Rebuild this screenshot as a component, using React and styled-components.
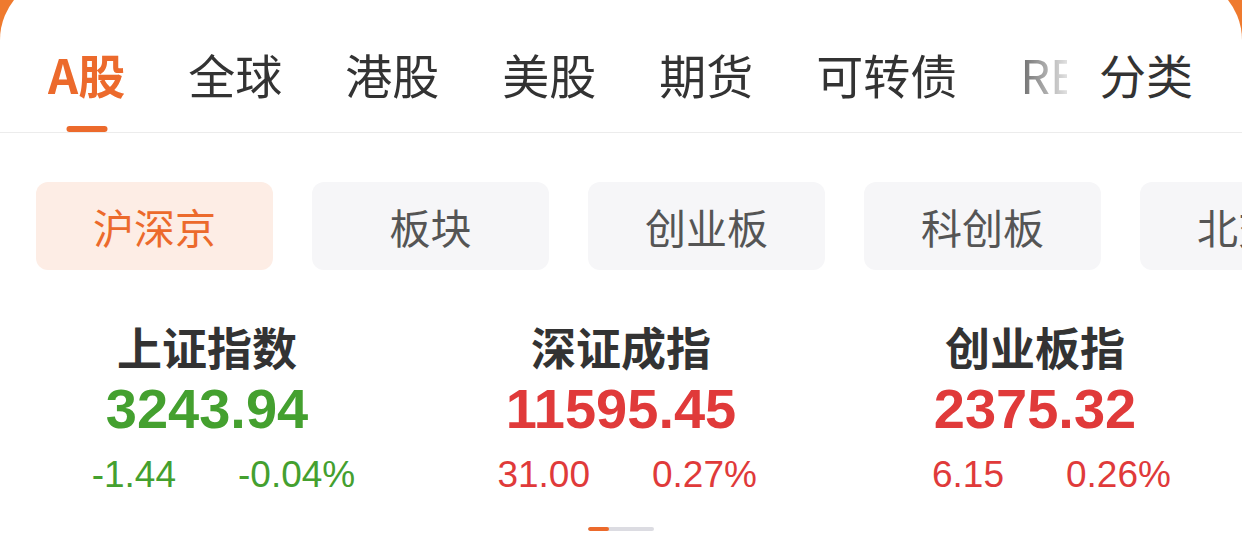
import styled, { createGlobalStyle } from "styled-components";

const GlobalStyle = createGlobalStyle`
  html, body {
    margin: 0;
    padding: 0;
    background: #ef7a2e;
    overflow: hidden;
  }
  body {
    font-family: "Noto Sans CJK SC", "Noto Sans", sans-serif;
  }
`;

const ORANGE = "#ec6a2c";
const GREEN = "#44a02f";
const RED = "#e03a3a";

const Card = styled.div`
  background: #fff;
  margin-top: -24px;
  padding-top: 24px;
  border-radius: 64px 64px 0 0;
  height: 561px;
  box-sizing: border-box;
`;

const TabBar = styled.div`
  display: flex;
  height: 133px;
  box-sizing: border-box;
  border-bottom: 1px solid #ececec;
  padding-left: 48px;
  padding-right: 49px;
`;

const Scroller = styled.div`
  flex: 1;
  display: flex;
  gap: 63px;
  overflow: hidden;
  -webkit-mask-image: linear-gradient(to right, #000 calc(100% - 70px), rgba(0, 0, 0, 0.15));
  mask-image: linear-gradient(to right, #000 calc(100% - 70px), rgba(0, 0, 0, 0.15));
`;

const Tab = styled.div`
  position: relative;
  flex-shrink: 0;
  display: flex;
  align-items: center;
  padding-top: 14px;
  box-sizing: border-box;
  height: 100%;
  font-size: 47px;
  line-height: 1;
  white-space: nowrap;
  color: ${(p) => (p.$active ? ORANGE : "#333")};
  font-weight: ${(p) => (p.$active ? 700 : 400)};
`;

const Underline = styled.span`
  position: absolute;
  left: 50%;
  bottom: 0;
  transform: translateX(-50%);
  width: 41px;
  height: 6px;
  border-radius: 3px;
  background: ${ORANGE};
`;

const CategoryButton = styled(Tab)`
  margin-left: 32px;
`;

const ChipRow = styled.div`
  display: flex;
  gap: 39px;
  padding: 49px 0 0 36px;
  overflow: hidden;
`;

const Chip = styled.div`
  flex-shrink: 0;
  width: 237px;
  height: 88px;
  border-radius: 12px;
  display: flex;
  align-items: center;
  justify-content: center;
  font-size: 41px;
  background: ${(p) => (p.$active ? "#fdede5" : "#f6f6f8")};
  color: ${(p) => (p.$active ? ORANGE : "#555")};
`;

const IndexGrid = styled.div`
  display: grid;
  grid-template-columns: repeat(3, 1fr);
  padding-top: 49px;
`;

const IndexCell = styled.div`
  display: flex;
  flex-direction: column;
  align-items: center;
`;

const IndexName = styled.div`
  font-size: 45px;
  line-height: 56px;
  font-weight: 700;
  color: #333;
`;

const IndexValue = styled.div`
  margin-top: 2px;
  font-family: "Liberation Sans", Arial, sans-serif;
  font-size: 56px;
  line-height: 64px;
  font-weight: 700;
  color: ${(p) => p.$color};
`;

const ChangeRow = styled.div`
  margin-top: 12px;
  width: 100%;
  display: grid;
  grid-template-columns: 1fr 1fr;
  column-gap: 62px;
  font-family: "Liberation Sans", Arial, sans-serif;
  font-size: 37px;
  line-height: 44px;
  color: ${(p) => p.$color};
  span:first-child {
    justify-self: end;
  }
  span:last-child {
    justify-self: start;
  }
`;

const Pager = styled.div`
  display: flex;
  justify-content: center;
  margin-top: 30px;
`;

const PagerTrack = styled.div`
  display: flex;
  width: 66px;
  height: 4px;
  border-radius: 2px;
  background: #dcdce2;
  overflow: hidden;
`;

const PagerThumb = styled.div`
  width: 21px;
  height: 100%;
  border-radius: 2px;
  background: ${ORANGE};
`;

const tabs = ["A股", "全球", "港股", "美股", "期货", "可转债", "REITs"];
const chips = ["沪深京", "板块", "创业板", "科创板", "北交所"];
const indices = [
  { name: "上证指数", value: "3243.94", change: "-1.44", pct: "-0.04%", color: GREEN },
  { name: "深证成指", value: "11595.45", change: "31.00", pct: "0.27%", color: RED },
  { name: "创业板指", value: "2375.32", change: "6.15", pct: "0.26%", color: RED },
];

export default function App() {
  return (
    <>
      <GlobalStyle />
      <Card>
        <TabBar>
          <Scroller>
            {tabs.map((t, i) => (
              <Tab key={t} $active={i === 0}>
                {t}
                {i === 0 && <Underline />}
              </Tab>
            ))}
          </Scroller>
          <CategoryButton>分类</CategoryButton>
        </TabBar>
        <ChipRow>
          {chips.map((c, i) => (
            <Chip key={c} $active={i === 0}>
              {c}
            </Chip>
          ))}
        </ChipRow>
        <IndexGrid>
          {indices.map((d) => (
            <IndexCell key={d.name}>
              <IndexName>{d.name}</IndexName>
              <IndexValue $color={d.color}>{d.value}</IndexValue>
              <ChangeRow $color={d.color}>
                <span>{d.change}</span>
                <span>{d.pct}</span>
              </ChangeRow>
            </IndexCell>
          ))}
        </IndexGrid>
        <Pager>
          <PagerTrack>
            <PagerThumb />
          </PagerTrack>
        </Pager>
      </Card>
    </>
  );
}
